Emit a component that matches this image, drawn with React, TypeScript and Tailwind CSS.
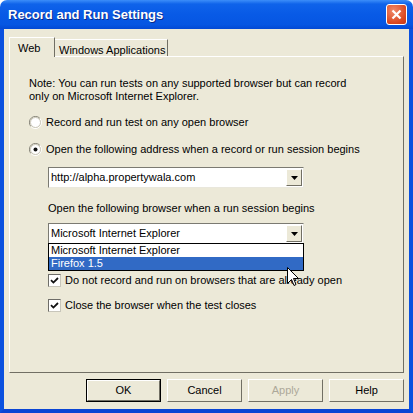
import React from 'react';

const Radio: React.FC<{ checked?: boolean }> = ({ checked }) => (
  <svg width="13" height="13" viewBox="0 0 13 13" className="shrink-0">
    <path d="M11 2.5A6 6 0 0 0 1.8 10.4" fill="none" stroke="#8c8a7f" strokeWidth="1" />
    <path d="M1.8 10.4A6 6 0 0 0 11 2.5" fill="none" stroke="#ffffff" strokeWidth="1" />
    <circle cx="6.5" cy="6.5" r="5" fill="#ffffff" stroke="#c9c6b8" strokeWidth="1" />
    {checked && <circle cx="6.5" cy="6.5" r="2" fill="#111111" />}
  </svg>
);

const Checkbox: React.FC = () => (
  <span className="w-[13px] h-[13px] shrink-0 bg-white border border-t-[#6e6d68] border-l-[#6e6d68] border-r-[#c8c6bb] border-b-[#c8c6bb] flex items-center justify-center">
    <svg width="9" height="9" viewBox="0 0 9 9">
      <path d="M1 4.2 L3.4 6.6 L8 2" fill="none" stroke="#111" strokeWidth="1.8" />
    </svg>
  </span>
);

const Combo: React.FC<{ value: string }> = ({ value }) => (
  <div className="w-[256px] h-[21px] bg-white border border-t-[#7b7a72] border-l-[#7b7a72] border-r-[#e9e7dc] border-b-[#e9e7dc] flex items-center pl-[2px] pr-[1px]">
    <span className="flex-1 leading-[13px]">{value}</span>
    <span className="w-[16px] h-[17px] bg-[#ECE9D8] border border-t-white border-l-white border-r-[#716F64] border-b-[#716F64] flex items-center justify-center">
      <svg width="7" height="4" viewBox="0 0 7 4"><path d="M0 0 H7 L3.5 4 Z" fill="#000" /></svg>
    </span>
  </div>
);

const Button: React.FC<{ label: string; primary?: boolean; disabled?: boolean }> = ({ label, primary, disabled }) => (
  <div className={`w-[75px] h-[23px] ${primary ? 'border border-black' : ''}`}>
    <div className={`w-full h-full bg-[#ECE9D8] border border-t-white border-l-white border-r-[#716F64] border-b-[#716F64] flex items-center justify-center ${disabled ? 'text-[#ACA899]' : 'text-black'}`}>
      {label}
    </div>
  </div>
);

export default function App() {
  return (
    <div className="w-[413px] h-[413px] bg-white flex flex-col font-['Liberation_Sans',Arial,sans-serif] text-[11px] text-black">
      <div className="h-[29px] rounded-t-[7px] bg-[linear-gradient(to_bottom,#3c8ef9_0%,#0f63ea_14%,#085ae6_50%,#0656e2_85%,#0349d4_100%)] flex items-center pl-[8px] pr-[6px]">
        <span className="flex-1 text-white font-bold text-[13px] [text-shadow:1px_1px_0_#0a2b8a]">
          Record and Run Settings
        </span>
        <span className="w-[21px] h-[21px] rounded-[3px] border border-white bg-[radial-gradient(circle_at_35%_30%,#f08a6a,#d9461f_70%,#c13a18)] flex items-center justify-center">
          <svg width="11" height="11" viewBox="0 0 11 11">
            <path d="M1.5 1.5 L9.5 9.5 M9.5 1.5 L1.5 9.5" stroke="#fff" strokeWidth="2.2" />
          </svg>
        </span>
      </div>

      <div className="flex-1 bg-[#ECE9D8] border-x-4 border-b-4 border-x-[#0b51df] border-b-[#0a45d4] flex flex-col px-[5px]">
        <div className="flex items-end pt-[8px] h-[27px]">
          <div className="w-[46px] h-[20px] relative z-10 -mb-[1px] bg-[#ECE9D8] border-t border-l border-t-white border-l-white border-r border-r-[#716F64] flex items-start pl-[8px] pt-[2px]">
            Web
          </div>
          <div className="w-[113px] h-[17px] border-t border-r border-t-white border-r-[#716F64] flex items-start pl-[4px] pt-[2px]">
            Windows Applications
          </div>
        </div>

        <div className="h-[317px] border border-t-white border-l-white border-r-[#716F64] border-b-[#716F64] relative">
          <div className="pl-[19px] pt-[20px] leading-[13px]">
            <p>Note: You can run tests on any supported browser but can record</p>
            <p>only on Microsoft Internet Explorer.</p>
          </div>

          <div className="pl-[19px] mt-[13px] flex flex-col gap-[14px]">
            <label className="flex items-center gap-[4px] h-[13px]"><Radio /> Record and run test on any open browser</label>
            <label className="flex items-center gap-[4px] h-[13px]"><Radio checked /> Open the following address when a record or run session begins</label>
          </div>

          <div className="pl-[38px] mt-[11px]">
            <Combo value="http://alpha.propertywala.com" />
            <p className="mt-[14px] leading-[13px]">Open the following browser when a run session begins</p>
            <div className="mt-[8px] relative">
              <Combo value="Microsoft Internet Explorer" />
              <div className="absolute left-0 top-[20px] w-[256px] border border-black bg-white z-10">
                <div className="h-[13px] leading-[13px] pl-[2px]">Microsoft Internet Explorer</div>
                <div className="h-[13px] leading-[13px] pl-[2px] bg-[#316AC5] text-white">Firefox 1.5</div>
              </div>
            </div>
            <div className="mt-[30px] flex flex-col gap-[13px]">
              <label className="flex items-center gap-[4px] h-[12px]"><Checkbox /> Do not record and run on browsers that are already open</label>
              <label className="flex items-center gap-[4px] h-[12px]"><Checkbox /> Close the browser when the test closes</label>
            </div>
          </div>

          <svg className="absolute left-[277px] top-[210px] z-20" width="12" height="20" viewBox="0 0 12 20">
            <path d="M0.5 0.5 V16.5 L4.5 12.5 L7 18.5 L9 17.5 L6.5 11.5 H11.5 Z" fill="#fff" stroke="#000" strokeWidth="1" strokeLinejoin="miter" />
          </svg>
        </div>

        <div className="flex justify-end gap-[6px] mt-[6px]">
          <Button label="OK" primary />
          <Button label="Cancel" />
          <Button label="Apply" disabled />
          <Button label="Help" />
        </div>
      </div>
    </div>
  );
}
